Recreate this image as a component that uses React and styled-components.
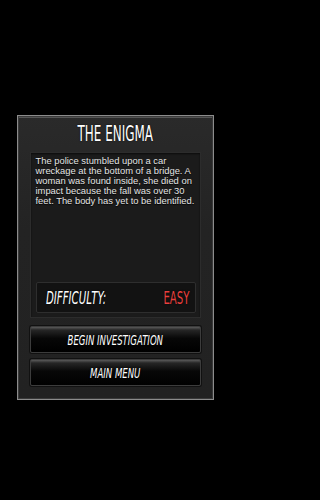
import React from 'react'
import styled, { createGlobalStyle } from 'styled-components'

const GlobalStyle = createGlobalStyle`
  html, body {
    margin: 0;
    padding: 0;
    background: #000;
  }
  body {
    font-family: "Liberation Sans", Arial, sans-serif;
  }
`

const Screen = styled.div`
  width: 230px;
  height: 500px;
  display: flex;
  justify-content: center;
  padding-top: 115px;
  box-sizing: border-box;
`

const Panel = styled.div`
  width: 197px;
  height: 285px;
  box-sizing: border-box;
  border: 1px solid #8c8c8c;
  background: linear-gradient(180deg, #2a2a2a 0%, #232323 40%, #222 100%);
  box-shadow: inset 0 0 0 1px #3a3a3a, inset 0 1px 0 1px #555;
  padding: 0 12px 13px;
  display: flex;
  flex-direction: column;
`

const Title = styled.h1`
  margin: 0;
  height: 36px;
  display: flex;
  align-items: center;
  justify-content: center;
  color: #fff;
  font-weight: normal;
`

// condensed display font: stretch a plain sans horizontally
const Condensed = styled.span`
  display: inline-block;
  font-family: "DejaVu Sans", sans-serif;
  font-size: ${p => p.$size}px;
  font-style: ${p => (p.$italic ? 'italic' : 'normal')};
  color: ${p => p.$color || '#fff'};
  transform: scaleX(${p => p.$scale});
  transform-origin: ${p => p.$origin || 'center'};
  white-space: nowrap;
  text-shadow: 0 0 2px rgba(0, 0, 0, 0.9);
`

const Story = styled.div`
  height: 166px;
  box-sizing: border-box;
  background: #1b1b1b;
  border: 1px solid #2c2c2c;
  box-shadow: inset 0 1px 2px rgba(0, 0, 0, 0.6);
  padding: 3px 4px 4px 5px;
  display: flex;
  flex-direction: column;
  justify-content: space-between;
`

const StoryText = styled.p`
  margin: 0;
  font-size: 9.4px;
  line-height: 10px;
  color: #e4e4e4;
  text-shadow: 0 1px 1px #000;
`

const DifficultyBar = styled.div`
  height: 31px;
  box-sizing: border-box;
  background: #121212;
  border: 1px solid #2e2e2e;
  border-radius: 2px;
  display: flex;
  align-items: center;
  justify-content: space-between;
  padding: 0 6px 0 9px;
`

const Buttons = styled.div`
  margin-top: 8px;
  display: flex;
  flex-direction: column;
  gap: 6px;
`

const Button = styled.button`
  height: 27px;
  width: 100%;
  box-sizing: border-box;
  border: 1px solid #3c3c3c;
  border-radius: 2px;
  background: linear-gradient(180deg, #5a5a5a 0%, #262626 12%, #070707 45%, #000 100%);
  box-shadow: 0 0 0 1px #111;
  display: flex;
  align-items: center;
  justify-content: center;
  padding: 0;
  cursor: pointer;
`

export default function App() {
  return (
    <>
      <GlobalStyle />
      <Screen>
        <Panel>
          <Title>
            <Condensed $size={21} $scale={0.57}>THE ENIGMA</Condensed>
          </Title>
          <Story>
            <StoryText>
              The police stumbled upon a car wreckage at the bottom of a bridge. A
              woman was found inside, she died on impact because the fall was over 30
              feet. The body has yet to be identified.
            </StoryText>
            <DifficultyBar>
              <Condensed $size={17} $scale={0.6} $italic $origin="left">
                DIFFICULTY:
              </Condensed>
              <Condensed $size={17} $scale={0.6} $color="#e8403f" $origin="right">
                EASY
              </Condensed>
            </DifficultyBar>
          </Story>
          <Buttons>
            <Button>
              <Condensed $size={14} $scale={0.61} $italic>BEGIN INVESTIGATION</Condensed>
            </Button>
            <Button>
              <Condensed $size={14} $scale={0.61} $italic>MAIN MENU</Condensed>
            </Button>
          </Buttons>
        </Panel>
      </Screen>
    </>
  )
}
